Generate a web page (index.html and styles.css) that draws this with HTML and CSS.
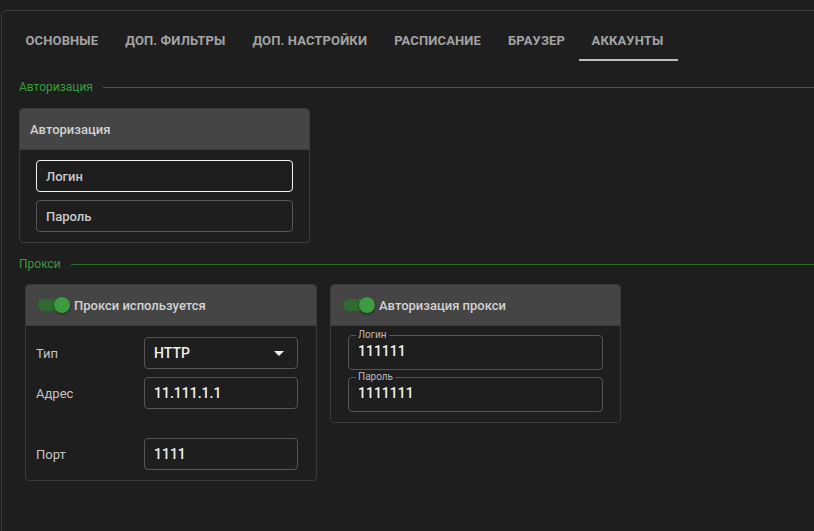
FILE: index.html
```html
<!DOCTYPE html>
<html lang="ru">
<head>
<meta charset="utf-8">
<link rel="stylesheet" href="styles.css">
</head>
<body>
<div class="panel">
  <nav class="tabs">
    <div class="tab">Основные</div>
    <div class="tab">Доп. фильтры</div>
    <div class="tab">Доп. настройки</div>
    <div class="tab">Расписание</div>
    <div class="tab">Браузер</div>
    <div class="tab active">Аккаунты</div>
  </nav>

  <div class="content">
    <div class="legend"><span>Авторизация</span><i></i></div>
    <div class="card card-auth">
      <div class="card-head">Авторизация</div>
      <div class="card-body stack">
        <div class="field focused">Логин</div>
        <div class="field">Пароль</div>
      </div>
    </div>

    <div class="legend legend-proxy"><span>Прокси</span><i></i></div>
    <div class="proxy-row">
      <div class="card card-proxy">
        <div class="card-head"><span class="switch"><span class="knob"></span></span>Прокси используется</div>
        <div class="card-body grid">
          <div class="lbl">Тип</div>
          <div class="field value select">HTTP
            <svg width="10" height="5" viewBox="0 0 10 5"><path d="M0 0H10L5 5Z" fill="#f0f0f0"/></svg>
          </div>
          <div class="lbl">Адрес</div>
          <div class="field value">11.111.1.1</div>
          <div class="lbl spaced">Порт</div>
          <div class="field value spaced">1111</div>
        </div>
      </div>

      <div class="card card-pauth">
        <div class="card-head"><span class="switch"><span class="knob"></span></span>Авторизация прокси</div>
        <div class="card-body outlined">
          <fieldset class="ofield"><legend>Логин</legend><div class="oval">111111</div></fieldset>
          <fieldset class="ofield"><legend>Пароль</legend><div class="oval">1111111</div></fieldset>
        </div>
      </div>
    </div>
  </div>
</div>
</body>
</html>
```

FILE: styles.css
```css
* { box-sizing: border-box; }
html, body {
  margin: 0;
  height: 100%;
  overflow: hidden;
  background: #1e1e1e;
  font-family: Roboto, "Noto Sans", Arial, sans-serif;
}
.panel {
  margin: 10px 0 0 1px;
  width: calc(100% + 20px);
  height: 600px;
  border: 1px solid #3c3c3c;
  border-radius: 5px 0 0 0;
  padding: 10px 0 0 10px;
}
.tabs {
  display: flex;
  height: 40px;
}
.tab {
  padding: 0 13.5px;
  display: flex;
  align-items: center;
  text-transform: uppercase;
  font-weight: 700;
  font-size: 13px;
  letter-spacing: 0.13px;
  color: #a3a3a3;
  border-bottom: 2px solid transparent;
}
.tab.active {
  border-bottom-color: #bdbdbd;
  padding: 0 15px 0 13px;
}
.content {
  padding: 18px 0 0 7px;
}
.legend {
  display: flex;
  align-items: center;
  height: 16px;
  font-size: 12px;
  color: #3c9a3c;
}
.legend i {
  flex: 1;
  height: 1px;
  background: #236f23;
  margin-left: 10px;
}
.card {
  border: 1px solid #3a3a3a;
  border-radius: 4px;
  overflow: hidden;
}
.card-head {
  height: 41px;
  background: #454545;
  display: flex;
  align-items: center;
  font-size: 13px;
  font-weight: 500;
  color: #d2d2d2;
  border-bottom: 1px solid #3a3a3a;
}
.card-auth {
  width: 291px;
  margin-top: 13px;
}
.card-auth .card-head { padding-left: 10px; }
.stack {
  display: flex;
  flex-direction: column;
  gap: 8px;
  padding: 10px 16px 10px 16px;
}
.field {
  height: 32px;
  border: 1px solid #565656;
  border-radius: 4px;
  display: flex;
  align-items: center;
  padding-left: 9px;
  font-size: 13px;
  font-weight: 500;
  color: #cacaca;
}
.field.focused { border-color: #f2f2f2; }

.legend-proxy { margin-top: 13px; }
.proxy-row {
  display: flex;
  align-items: flex-start;
  gap: 13px;
  margin: 12px 0 0 6px;
}
.card-proxy { width: 292px; }
.card-pauth { width: 291px; }
.card-proxy .card-head, .card-pauth .card-head { padding-left: 12px; }
.switch {
  position: relative;
  width: 28px;
  height: 12px;
  border-radius: 6px;
  background: #2f6b31;
  margin-right: 8px;
}
.knob {
  position: absolute;
  right: -4px;
  top: -2px;
  width: 16px;
  height: 16px;
  border-radius: 50%;
  background: #3d9b40;
  box-shadow: 0 1px 3px rgba(0,0,0,0.5);
}
.grid {
  display: grid;
  grid-template-columns: 108px 154px;
  row-gap: 8px;
  align-items: center;
  padding: 11px 0 10px 10px;
}
.lbl {
  font-size: 13px;
  color: #c4c4c4;
}
.value {
  color: #f0f0f0;
  font-size: 14px;
}
.select {
  justify-content: space-between;
  padding-right: 13px;
}
.spaced { margin-top: 21px; }

.outlined {
  display: flex;
  flex-direction: column;
  gap: 2px;
  padding: 4px 17px 10px 17px;
}
.ofield {
  margin: 0;
  border: 1px solid #565656;
  border-radius: 4px;
  padding: 0 9px 7px 9px;
  min-width: 0;
}
.ofield legend {
  font-size: 10px;
  line-height: 10px;
  color: #bdbdbd;
  padding: 0 2px;
  margin-left: -2px;
}
.oval {
  height: 22px;
  line-height: 22px;
  font-size: 14px;
  font-weight: 500;
  color: #f0f0f0;
}
```
